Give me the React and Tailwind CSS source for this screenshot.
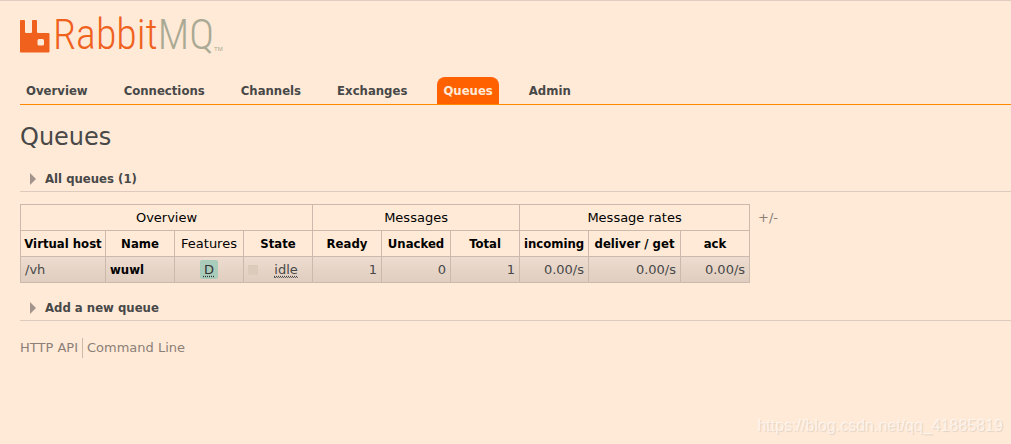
import React from "react";

const TABS = ["Overview", "Connections", "Channels", "Exchanges", "Queues", "Admin"];

const COLUMNS = [
  { label: "Virtual host", bold: true },
  { label: "Name", bold: true },
  { label: "Features", bold: false },
  { label: "State", bold: true },
  { label: "Ready", bold: true },
  { label: "Unacked", bold: true },
  { label: "Total", bold: true },
  { label: "incoming", bold: true },
  { label: "deliver / get", bold: true },
  { label: "ack", bold: true },
];

const QUEUES = [
  { vhost: "/vh", name: "wuwl", state: "idle", numbers: ["1", "0", "1", "0.00/s", "0.00/s", "0.00/s"] },
];

const strong = "font-['DejaVu_Sans_Condensed','DejaVu_Sans',sans-serif] font-bold";

function Logo() {
  return (
    <a href="#overview" aria-label="RabbitMQ" className="flex items-end h-9">
      <svg width="30" height="34" viewBox="0 0 30 34" className="shrink-0" aria-hidden="true">
        <path
          fill="#f0611e"
          fillRule="evenodd"
          d="M1 1h3a1 1 0 0 1 1 1v11a1 1 0 0 0 1 1h5a1 1 0 0 0 1-1V2a1 1 0 0 1 1-1h3a1 1 0 0 1 1 1v11a1 1 0 0 0 1 1h10.500a1 1 0 0 1 1 1v17.500a1 1 0 0 1-1 1H1a1 1 0 0 1-1-1V2a1 1 0 0 1 1-1zM19 20a1.500 1.500 0 0 0-1.500 1.500v3.500a1.500 1.500 0 0 0 1.500 1.500h3.500a1.500 1.500 0 0 0 1.500-1.500v-3.500a1.500 1.500 0 0 0-1.500-1.500z"
        />
      </svg>
      <span className="pl-[3px] font-['Roboto_Condensed','Roboto',sans-serif] font-light text-[42px] leading-9 text-[#f0611e]">
        Rabbit<span className="text-[#a9a994]">MQ</span>
      </span>
      <span className="font-['Liberation_Sans',sans-serif] text-[6px] leading-[8px] text-[#a9a994]">TM</span>
    </a>
  );
}

function SectionHeading({ children }) {
  return (
    <h2 className="border-b border-[#dccabc]">
      <button type="button" className={`flex items-center w-full h-[25px] pl-[10px] gap-[9px] text-left ${strong}`}>
        <svg width="6" height="12" viewBox="0 0 6 12" aria-hidden="true">
          <path fill="#a2948a" d="M0 0l6 6-6 6z" />
        </svg>
        {children}
      </button>
    </h2>
  );
}

function QueueTable() {
  const cell = "border border-[#ccb9ab] px-1 font-normal whitespace-nowrap";
  return (
    <table className="table-fixed w-[730px] border-collapse text-center text-black">
      <colgroup>
        <col className="w-[85px]" />
        <col span={6} className="w-[69px]" />
        <col className="w-[69px]" />
        <col className="w-[92px]" />
        <col className="w-[69px]" />
      </colgroup>
      <thead>
        <tr className="h-[26px]">
          <th colSpan={4} className={cell}>Overview</th>
          <th colSpan={3} className={cell}>Messages</th>
          <th colSpan={3} className={cell}>Message rates</th>
        </tr>
        <tr className="h-[26px]">
          {COLUMNS.map((c) => (
            <th key={c.label} className="border border-[#ccb9ab] font-normal whitespace-nowrap">
              <button type="button" className={c.bold ? strong : "font-normal"}>{c.label}</button>
            </th>
          ))}
        </tr>
      </thead>
      <tbody>
        {QUEUES.map((q) => (
          <tr key={q.name} className="h-[26px] bg-linear-to-b from-[#eddccf] to-[#dfcdbf] text-[#484848]">
            <td className={`${cell} text-left`}>{q.vhost}</td>
            <td className={`${cell} text-left`}>
              <a href="#queue" className={`text-black ${strong}`}>{q.name}</a>
            </td>
            <td className={cell}>
              <abbr title="durable: true" className="inline-block px-1 h-[19px] leading-[19px] rounded-xs bg-[#aaccbb] text-[#333] underline decoration-dotted underline-offset-2">D</abbr>
            </td>
            <td className={cell}>
              <div className="flex items-center">
                <span className="size-[10px] bg-[#dccabb]" />
                <span className="grow pl-[6px] text-center">
                  <abbr title="idle" className="border-b border-dotted border-[#666] underline decoration-dotted underline-offset-2">{q.state}</abbr>
                </span>
              </div>
            </td>
            {q.numbers.map((n, i) => (
              <td key={i} className={`${cell} text-right`}>{n}</td>
            ))}
          </tr>
        ))}
      </tbody>
    </table>
  );
}

export default function App() {
  return (
    <div className="min-h-screen flex flex-col bg-[#ffead7] border-t border-[#e0cdc0] text-[#484848] text-[13px] leading-4 font-['DejaVu_Sans',Verdana,sans-serif]">
      <header className="pl-5 pt-4">
        <Logo />
        <nav className="mt-6 border-b border-[#ff8800]">
          <ul className="flex gap-6">
            {TABS.map((t) => (
              <li key={t} className={strong}>
                <a
                  href={`#${t.toLowerCase()}`}
                  className={
                    t === "Queues"
                      ? "block h-[27px] px-[6px] leading-[27px] rounded-t-lg bg-[#ff6000] text-[#ffead7]"
                      : "block h-[27px] px-[6px] leading-[27px]"
                  }
                >
                  {t}
                </a>
              </li>
            ))}
          </ul>
        </nav>
      </header>

      <main className="pl-5">
        <h1 className="pt-4 pb-[13px] text-2xl">Queues</h1>
        <SectionHeading>All queues (1)</SectionHeading>
        <div className="flex items-start gap-2 py-3">
          <QueueTable />
          <button type="button" className="pt-[6px] text-[#8c7f77]">+/-</button>
        </div>
        <SectionHeading>Add a new queue</SectionHeading>
      </main>

      <footer className="flex pl-5 pt-[17px] leading-5 text-[#8c7f77]">
        <a href="#api" className="pr-1 border-r border-[#ccb9ab]">HTTP API</a>
        <a href="#cli" className="pl-1">Command Line</a>
      </footer>

      <p className="mt-auto pr-2 pb-[6px] text-right text-base leading-6 font-['Liberation_Sans',sans-serif] text-white/60 [text-shadow:1px_1px_1px_#0000001a]">
        https://blog.csdn.net/qq_41885819
      </p>
    </div>
  );
}
